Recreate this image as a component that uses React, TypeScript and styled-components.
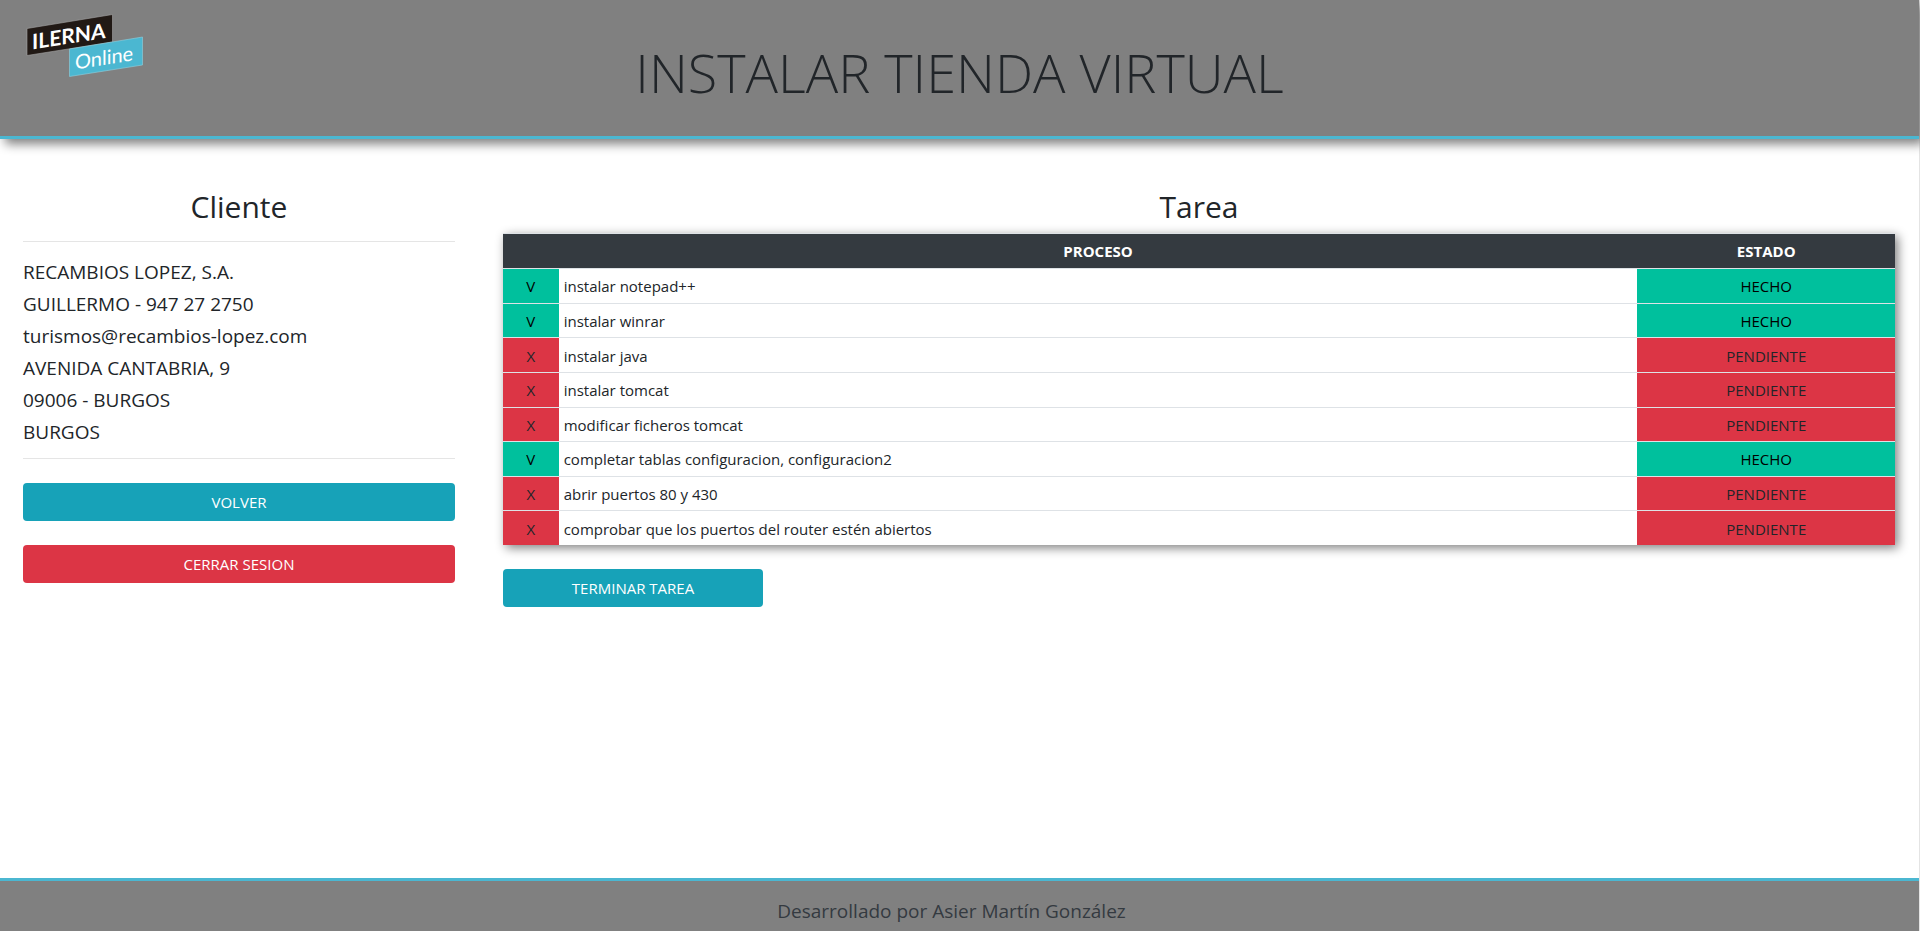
import React from 'react';
import styled, { createGlobalStyle } from 'styled-components';

const GlobalStyle = createGlobalStyle`
  *, *::before, *::after { box-sizing: border-box; }
  html { background: #fff; }
  body {
    margin: 0;
    font-family: 'Segoe UI', 'Open Sans', 'Noto Sans', sans-serif;
    font-size: 15px;
    line-height: 24px;
    color: #212529;
    overflow-x: hidden;
  }
`;

const Page = styled.div`
  display: flex;
  flex-direction: column;
  min-height: 100vh;
  border-right: 1px solid #e4e4e4;
`;

const Header = styled.header`
  display: grid;
  grid-template-columns: 1fr auto 1fr;
  align-items: start;
  height: 139px;
  padding: 8px 20px;
  background: #808080;
  border-bottom: 3px solid #4bb7d1;
  box-shadow: 5px 5px 10px #808080;
`;

const Logo = styled.svg`
  display: block;
`;

const Title = styled.h1`
  margin: 32px 0 0;
  font-size: 54px;
  font-weight: 300;
  line-height: 64px;
`;

const Main = styled.main`
  display: grid;
  grid-template-columns: 432fr 1392fr;
  column-gap: 48px;
  align-items: start;
  flex: 1;
  padding: 48px 24px 24px 23px;
`;

const Column = styled.section`
  display: flex;
  flex-direction: column;
`;

const Heading = styled.h2`
  margin: 0 0 6px;
  font-size: 30px;
  font-weight: 400;
  line-height: 40px;
  text-align: center;
`;

const ClientData = styled.address`
  margin: 8px 0 24px;
  padding: 14px 0 10px;
  border: solid #e5e5e5;
  border-width: 1px 0;
  font-size: 19px;
  font-style: normal;
  line-height: 32px;
`;

const Button = styled.button<{ $tone?: 'danger'; $narrow?: boolean }>`
  width: ${(p) => (p.$narrow ? '260px' : '100%')};
  height: 38px;
  margin: 0 0 24px;
  padding: 0 12px;
  border: 0;
  border-radius: 4px;
  background: ${(p) => (p.$tone === 'danger' ? '#dc3545' : '#17a2b8')};
  color: #fff;
  font: inherit;
  cursor: pointer;
`;

const Table = styled.table`
  width: 100%;
  height: 312px;
  margin-bottom: 24px;
  border-collapse: collapse;
  table-layout: fixed;
  box-shadow: 3px 3px 10px #808080;
`;

const HeadCell = styled.th<{ $width?: string }>`
  width: ${(p) => p.$width || 'auto'};
  height: 35px;
  padding: 4px 5px;
  border-top: 1px solid #dee2e6;
  background: #343a40;
  color: #fff;
  font-weight: 700;
`;

const Cell = styled.td`
  padding: 5px 5px 4px;
  border-top: 1px solid #dee2e6;
`;

const StatusCell = styled(Cell)<{ $done: boolean }>`
  background: ${(p) => (p.$done ? '#00c09d' : '#dc3545')};
  color: ${(p) => (p.$done ? '#000' : '#212529')};
  text-align: center;
`;

const Footer = styled.footer`
  height: 53px;
  padding: 14px 16px 0 0;
  background: #808080;
  border-top: 3px solid #4bb7d1;
  color: #343a40;
  font-size: 19px;
  line-height: 32px;
  text-align: center;
`;

const clientLines = [
  'RECAMBIOS LOPEZ, S.A.',
  'GUILLERMO - 947 27 2750',
  'turismos@recambios-lopez.com',
  'AVENIDA CANTABRIA, 9',
  '09006 - BURGOS',
  'BURGOS',
];

const steps = [
  { name: 'instalar notepad++', done: true },
  { name: 'instalar winrar', done: true },
  { name: 'instalar java', done: false },
  { name: 'instalar tomcat', done: false },
  { name: 'modificar ficheros tomcat', done: false },
  { name: 'completar tablas configuracion, configuracion2', done: true },
  { name: 'abrir puertos 80 y 430', done: false },
  { name: 'comprobar que los puertos del router estén abiertos', done: false },
];

function IlernaLogo() {
  return (
    <Logo width="130" height="75" viewBox="20 8 130 75" role="img" aria-label="ILERNA Online">
      <polygon points="27,28.5 112.5,14.5 112.5,42 27,55.5" fill="#211915" stroke="#a5a5a5" strokeWidth="0.6" />
      <polygon points="69.5,49 142.5,37 142.5,65 69.5,76.5" fill="#4bb7d1" stroke="#8fd0df" strokeWidth="0.6" />
      <g fill="#fff" fontFamily="Lato, sans-serif">
        <text transform="translate(32 49.5) skewY(-9)" fontSize="21" fontWeight="700">ILERNA</text>
        <text transform="translate(75 69.5) skewY(-9)" fontSize="20">Online</text>
      </g>
    </Logo>
  );
}

export default function App() {
  return (
    <>
      <GlobalStyle />
      <Page>
        <Header>
          <IlernaLogo />
          <Title>INSTALAR TIENDA VIRTUAL</Title>
        </Header>
        <Main>
          <Column>
            <Heading>Cliente</Heading>
            <ClientData>
              {clientLines.map((line) => (
                <div key={line}>{line}</div>
              ))}
            </ClientData>
            <Button type="button">VOLVER</Button>
            <Button type="button" $tone="danger">CERRAR SESION</Button>
          </Column>
          <Column>
            <Heading>Tarea</Heading>
            <Table>
              <thead>
                <tr>
                  <HeadCell $width="4%" aria-label="Resultado" />
                  <HeadCell scope="col">PROCESO</HeadCell>
                  <HeadCell scope="col" $width="18.5%">ESTADO</HeadCell>
                </tr>
              </thead>
              <tbody>
                {steps.map((step) => (
                  <tr key={step.name}>
                    <StatusCell $done={step.done}>{step.done ? 'V' : 'X'}</StatusCell>
                    <Cell>{step.name}</Cell>
                    <StatusCell $done={step.done}>{step.done ? 'HECHO' : 'PENDIENTE'}</StatusCell>
                  </tr>
                ))}
              </tbody>
            </Table>
            <Button type="button" $narrow>TERMINAR TAREA</Button>
          </Column>
        </Main>
        <Footer>Desarrollado por Asier Martín González</Footer>
      </Page>
    </>
  );
}
